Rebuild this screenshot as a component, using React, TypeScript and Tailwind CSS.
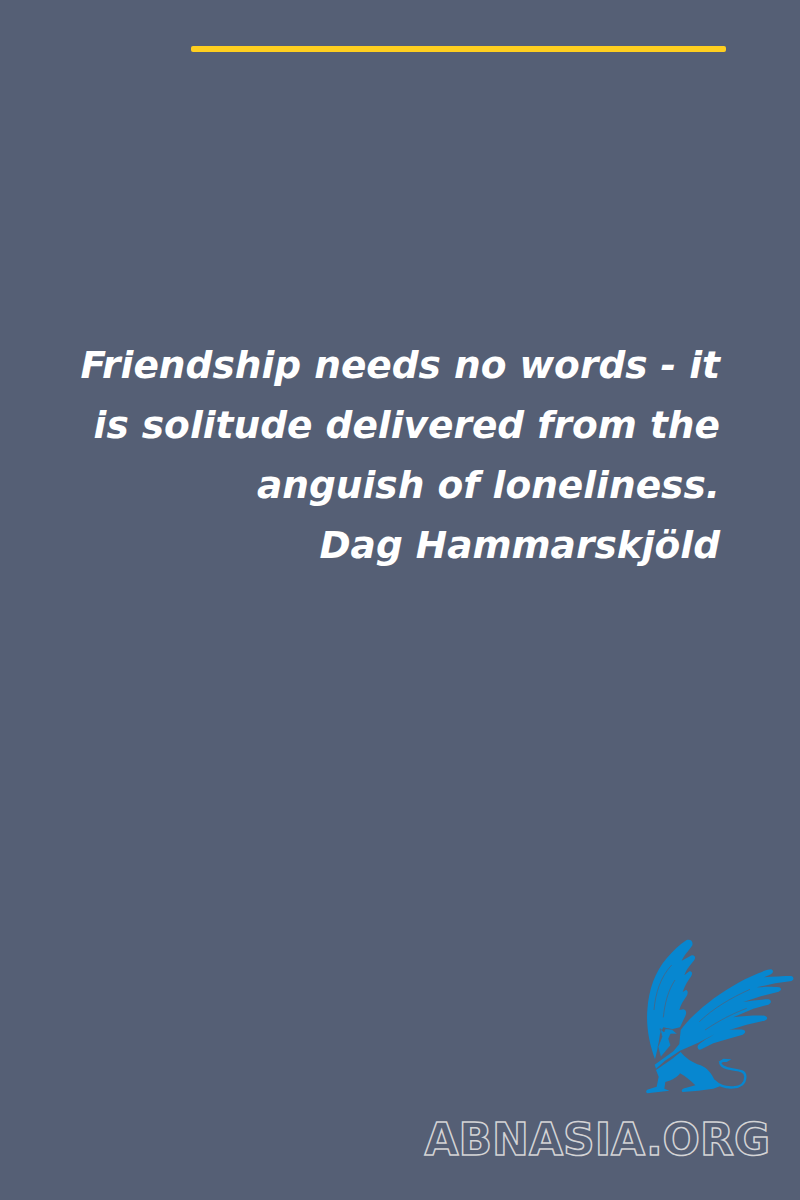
import React from 'react';

const lines = ['Friendship needs no words - it', 'is solitude delivered from the', 'anguish of loneliness.', 'Dag Hammarskjöld'];

const Griffin: React.FC = () => (
  <svg viewBox="0 0 510 510" width="170" height="170" className="block">
    {/* left wing */}
    <path fill="#0787d0" d="M75 388C58 340 48 290 52 240C56 180 75 125 110 85C130 62 150 42 170 30C182 26 190 34 187 46C178 60 165 72 155 92L185 76C194 74 198 82 193 90C182 104 170 116 163 136L178 124C186 122 188 130 184 138C176 150 166 162 158 186L168 180C175 182 174 190 170 198C160 212 152 225 148 240L160 238C170 240 170 250 166 258L150 292L125 298L100 292L90 312L84 350Z" />
    {/* right wing */}
    <path fill="#0787d0" d="M152 300C175 270 200 245 235 218C280 184 330 152 385 130C398 124 412 118 424 118C432 122 430 130 420 134L402 142C430 140 460 138 484 138C494 142 492 152 480 154L436 160L380 172C405 170 430 170 448 172C456 176 454 182 446 185L395 198L340 216C365 212 395 208 416 208C426 212 424 220 415 224L370 236L310 262C340 258 375 256 404 257C414 260 414 268 404 272L350 284L298 300C315 298 332 298 342 300C348 304 346 310 338 314L296 326L250 340L214 358C206 362 200 354 204 346C212 336 240 320 262 308L205 338L150 362L105 392L78 416L74 404L130 364L148 342Z" />
    <path fill="none" stroke="#555f75" strokeWidth="2" d="M72 240C76 190 92 140 125 105M100 262C104 220 115 180 135 150M208 275C250 235 300 205 360 178M225 300C270 270 310 250 350 235" />
    {/* body */}
    <path fill="#0787d0" d="M78 420L125 388L152 366C165 382 185 398 212 406C232 414 246 432 254 452L272 468L250 476L205 482L158 486C152 482 156 476 166 474L196 466C182 452 165 438 150 430C145 440 125 452 106 456L103 476L118 482L52 490C46 486 48 480 56 478L80 470L86 440Z" />
    <path fill="none" stroke="#0787d0" strokeWidth="7" strokeLinecap="round" d="M252 452C280 480 346 482 346 440C346 412 300 425 277 408C270 402 268 396 276 394" />
    <path fill="#0787d0" d="M265 396L280 386L304 388L290 396Z" />
    {/* head */}
    <path fill="#0787d0" stroke="#555f75" strokeWidth="2" d="M90 296L102 306L106 296L126 298L142 312L122 312L116 326L122 346L92 382L84 350L96 320Z" />
  </svg>
);

export default function App() {
  return (
    <div className="w-[800px] h-[1200px] bg-[#555f75] flex flex-col overflow-hidden">
      <div className="ml-[191px] mt-[46px] w-[535px] h-[6px] rounded-[2px] bg-[#ffcf1f]" />

      <div className="mt-[283px] pr-[80px] text-right text-white italic font-bold text-[37.5px] leading-[60px] font-['DejaVu_Sans',sans-serif]">
        {lines.map(line => (
          <div key={line} className="whitespace-nowrap">{line}</div>
        ))}
      </div>

      <div className="mt-auto flex flex-col items-end pb-[35px]">
        <div className="mb-[15px]">
          <Griffin />
        </div>
        <div className="pr-[30px] text-[44px] leading-[50px] font-bold text-transparent [-webkit-text-stroke:1.5px_#d4d4d6] font-['DejaVu_Sans',sans-serif]">
          ABNASIA.ORG
        </div>
      </div>
    </div>
  );
}
